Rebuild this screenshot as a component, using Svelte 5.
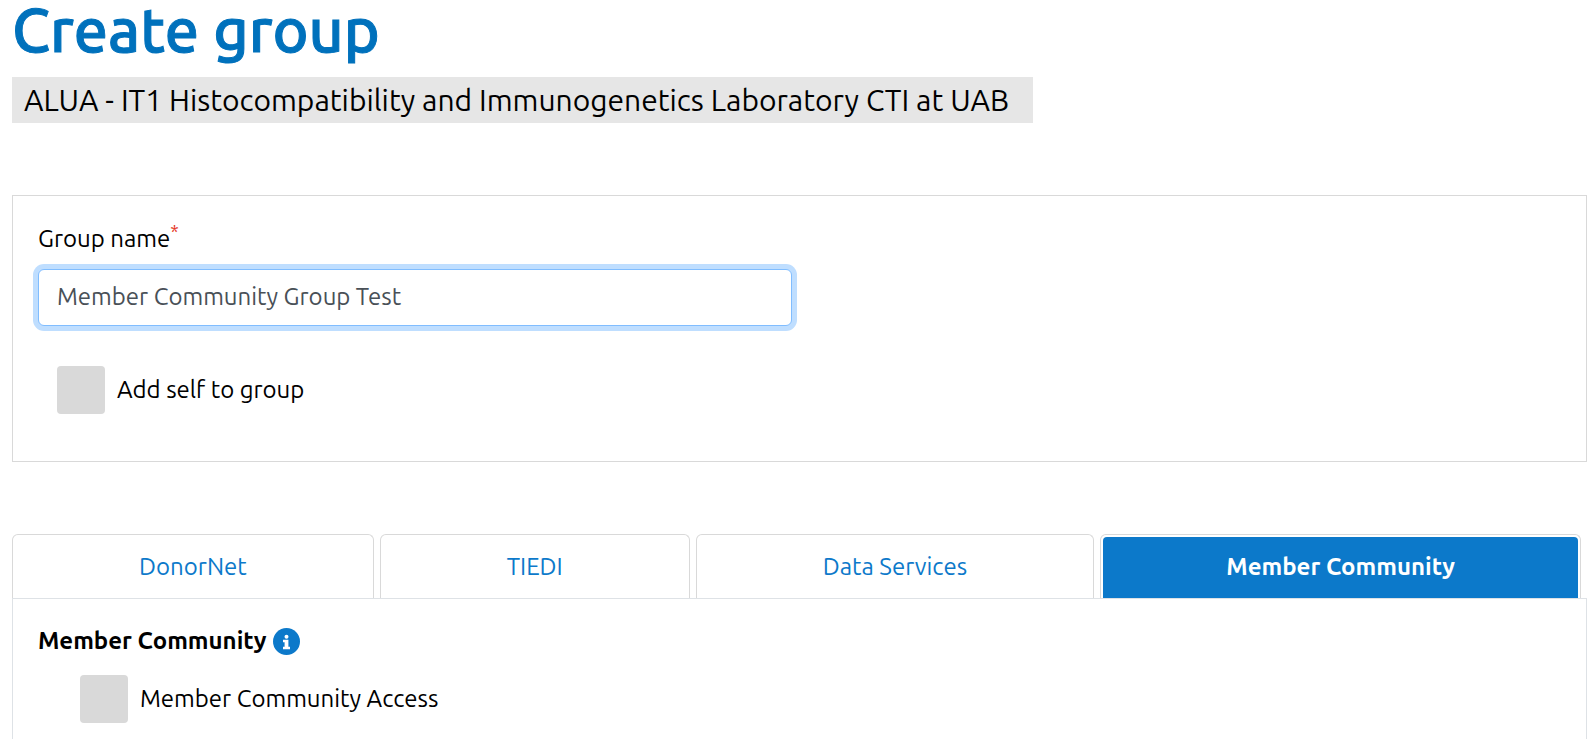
<script>
  let groupName = 'Member Community Group Test';
  let addSelf = false;
  let communityAccess = false;
  let activeTab = 'community';

  const tabs = [
    { id: 'donornet', label: 'DonorNet', grow: 356 },
    { id: 'tiedi', label: 'TIEDI', grow: 304 },
    { id: 'data', label: 'Data Services', grow: 393 },
    { id: 'community', label: 'Member Community', grow: 475 }
  ];
</script>

<main class="page">
  <h1>Create group</h1>
  <p class="institution">ALUA - IT1 Histocompatibility and Immunogenetics Laboratory CTI at UAB</p>

  <section class="details">
    <label class="field-label" for="group-name">Group name<sup class="required">*</sup></label>
    <input id="group-name" class="text-input" type="text" bind:value={groupName} />

    <label class="check-row">
      <input class="check" type="checkbox" bind:checked={addSelf} />
      <span>Add self to group</span>
    </label>
  </section>

  <div class="tabs" role="tablist">
    {#each tabs as tab (tab.id)}
      <button
        type="button"
        role="tab"
        class="tab"
        class:active={activeTab === tab.id}
        aria-selected={activeTab === tab.id}
        style="flex-grow: {tab.grow}"
        on:click={() => (activeTab = tab.id)}
      >
        <span class="tab-label">{tab.label}</span>
      </button>
    {/each}
  </div>

  <section class="tab-panel" role="tabpanel">
    {#if activeTab === 'community'}
      <h2>
        Member Community
        <button type="button" class="info" aria-label="About Member Community">
          <svg viewBox="0 0 27 27" aria-hidden="true">
            <circle cx="13.5" cy="13.5" r="13.5" fill="#0c79ca" />
            <circle cx="13.5" cy="8.7" r="2" fill="#fff" />
            <path d="M10 11.7h5.4v7h1.6v2.6h-7v-2.6h1.6v-4.400H10z" fill="#fff" />
          </svg>
        </button>
      </h2>

      <label class="check-row access">
        <input class="check" type="checkbox" bind:checked={communityAccess} />
        <span>Member Community Access</span>
      </label>
    {/if}
  </section>
</main>

<style>
  :global(body) {
    margin: 0;
    background: #fff;
  }

  .page {
    box-sizing: border-box;
    min-height: 100vh;
    display: flex;
    flex-direction: column;
    padding: 0 0 0 12px;
    color: #000;
    font-family: Ubuntu, "Noto Sans", sans-serif;
    font-size: 24px;
    line-height: 36px;
  }

  h1 {
    margin: 0 0 17px;
    color: #0071bc;
    font-size: 61px;
    font-weight: 500;
    line-height: 60px;
    -webkit-text-stroke: 1px #0071bc;
  }

  .institution {
    align-self: flex-start;
    margin: 0 0 72px;
    padding: 0 24px 0 12px;
    background: #e6e6e6;
    font-size: 30px;
    line-height: 46px;
  }

  .details {
    padding: 25px 25px 24px;
    margin-bottom: 72px;
    border: 1px solid #d9d9d9;
  }

  .field-label {
    display: block;
    margin-bottom: 12px;
  }

  .required {
    color: #e5351f;
    font-size: 18px;
    line-height: 0;
  }

  .text-input {
    display: block;
    box-sizing: border-box;
    width: 49.5%;
    height: 57px;
    padding: 0 18px 2px;
    border: 1px solid #80bdff;
    border-radius: 6px;
    outline: none;
    box-shadow: 0 0 0 5px #bfdeff;
    background: #fff;
    color: #495057;
    font: inherit;
  }

  .check-row {
    display: flex;
    align-items: center;
    gap: 12px;
    margin: 40px 0 23px 19px;
  }

  .check {
    appearance: none;
    flex: none;
    width: 48px;
    height: 48px;
    margin: 0;
    border-radius: 4px;
    background: #d9d9d9;
  }

  .check:checked {
    background: #0c79ca;
  }

  .tabs {
    display: flex;
    gap: 6px;
    padding-right: 6px;
  }

  .tab {
    display: flex;
    flex: 1 1 0;
    min-width: 0;
    height: 64px;
    padding: 2px 2px 0;
    border: 1px solid #d9d9d9;
    border-bottom: 0;
    border-radius: 6px 6px 0 0;
    background: #fff;
    color: #0c79ca;
    font: inherit;
    cursor: pointer;
  }

  .tab-label {
    flex: 1;
    align-self: stretch;
    border-radius: 4px 4px 0 0;
    line-height: 59px;
  }

  .active .tab-label {
    background: #0c79ca;
    color: #fff;
    font-weight: 700;
  }

  .tab-panel {
    flex: 1;
    padding: 24px 25px;
    border: 1px solid #dee2e6;
    border-bottom: 0;
  }

  h2 {
    display: flex;
    align-items: center;
    gap: 6px;
    margin: 0;
    font-size: 24px;
    font-weight: 700;
    line-height: 36px;
  }

  .info {
    display: flex;
    padding: 0;
    border: 0;
    background: none;
    cursor: pointer;
  }

  .info svg {
    width: 27px;
    height: 27px;
  }

  .access {
    margin: 16px 0 16px 42px;
  }
</style>
